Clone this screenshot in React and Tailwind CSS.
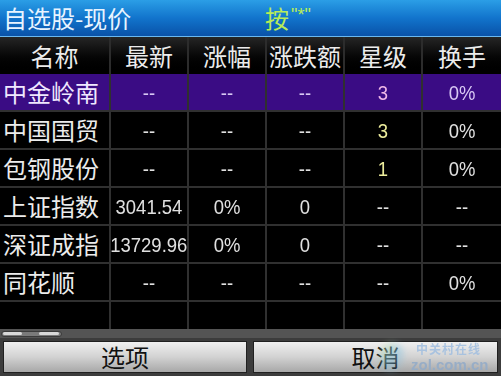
import React from "react";

const cjk = { fontFamily: '"Noto Sans CJK SC", "Noto Sans", sans-serif' };
const num = { fontFamily: '"Liberation Sans", "Noto Sans CJK SC", sans-serif' };

const headers = ["名称", "最新", "涨幅", "涨跌额", "星级", "换手"];
const rows = [
  ["中金岭南", "--", "--", "--", "3", "0%"],
  ["中国国贸", "--", "--", "--", "3", "0%"],
  ["包钢股份", "--", "--", "--", "1", "0%"],
  ["上证指数", "3041.54", "0%", "0", "--", "--"],
  ["深证成指", "13729.96", "0%", "0", "--", "--"],
  ["同花顺", "--", "--", "--", "--", "0%"],
];

const widths = ["w-[111px]", "w-[78px]", "w-[78px]", "w-[78px]", "w-[78px]", "w-[78px]"];

function Num({ children, className = "" }) {
  return (
    <span className={"inline-block text-[21px] leading-none scale-x-[0.88] " + className} style={num}>
      {children}
    </span>
  );
}

export default function App() {
  return (
    <div className="w-[501px] h-[376px] bg-black overflow-hidden flex flex-col relative select-none">
      {/* Title bar */}
      <div className="h-[37px] flex items-center bg-gradient-to-b from-[#2b9ee6] via-[#1274cc] to-[#0a52a8] border-b border-[#6ab8f0]">
        <span className="w-[265px] pl-[3px] text-[24px] leading-none text-[#e8f4ff]" style={cjk}>
          自选股-现价
        </span>
        <span className="text-[24px] leading-none text-[#b8ec58]" style={cjk}>
          按<span className="text-[18px] align-top ml-[2px]" style={num}>"*"</span>
        </span>
      </div>

      {/* Header */}
      <div className="h-[37px] flex bg-gradient-to-b from-[#262626] to-black">
        {headers.map((h, i) => (
          <div
            key={i}
            className={
              widths[i] +
              " flex items-center justify-center text-[24px] leading-none text-[#ececec] " +
              (i < 5 ? "border-r-2 border-[#2c2c2c]" : "")
            }
            style={cjk}
          >
            {h}
          </div>
        ))}
      </div>

      {/* Rows */}
      {rows.map((r, ri) => {
        const hl = ri === 0;
        return (
          <div
            key={ri}
            className={"h-[38px] flex border-b-2 border-[#303030] " + (hl ? "bg-[#3a0c84]" : "bg-black")}
          >
            {r.map((c, ci) => {
              const base =
                widths[ci] + " flex items-center " + (ci < 5 ? "border-r-2 border-[#303030] " : "");
              if (ci === 0) {
                return (
                  <div
                    key={ci}
                    className={base + "pl-[3px] text-[24px] leading-none " + (hl ? "text-[#f0e8ff]" : "text-[#ececec]")}
                    style={cjk}
                  >
                    {c}
                  </div>
                );
              }
              let color = hl ? "text-[#d8c8f4]" : "text-[#e0e0e0]";
              if (ci === 4 && c !== "--") color = hl ? "text-[#f0b8e8]" : "text-[#ecec9c]";
              return (
                <div key={ci} className={base + "justify-center"}>
                  <Num className={color}>{c}</Num>
                </div>
              );
            })}
          </div>
        );
      })}

      {/* Empty row */}
      <div className="h-[27px] flex bg-black">
        {widths.map((w, i) => (
          <div key={i} className={w + (i < 5 ? " border-r-2 border-[#303030]" : "")} />
        ))}
      </div>

      {/* Scroll track */}
      <div className="h-[9px] bg-[#545454] flex items-center pl-[1px]">
        <div className="w-[61px] h-[6px] rounded-full border border-[#3a3a3a] bg-[#7a7a7a] flex items-center px-[1px] gap-[17px]">
          <div className="w-[19px] h-[3px] rounded-full bg-[#d8d8d8]" />
          <div className="w-[20px] h-[3px] rounded-full bg-[#d8d8d8]" />
        </div>
      </div>

      {/* Bottom buttons */}
      <div className="flex-1 bg-[#3c3c3c] flex items-start pt-[3px] px-[3px] gap-[6px]">
        <div
          className="w-[244px] h-[32px] border border-[#202020] bg-gradient-to-b from-[#f0f0f0] via-[#d2d2d2] to-[#a8a8a8] flex items-center justify-center text-[24px] leading-none text-[#111]"
          style={cjk}
        >
          选项
        </div>
        <div
          className="w-[245px] h-[32px] border border-[#202020] bg-gradient-to-b from-[#f0f0f0] via-[#d2d2d2] to-[#a8a8a8] flex items-center justify-center text-[24px] leading-none text-[#111]"
          style={cjk}
        >
          取消
        </div>
      </div>

      {/* Watermark */}
      <div className="absolute left-[380px] top-[341px] w-[118px] h-[33px] pointer-events-none">
        <div className="absolute left-0 top-[2px] w-[24px] h-[28px] rounded-full bg-gradient-to-br from-[#e0f080] via-[#80c0e0] to-transparent opacity-50 blur-[3px]" />
        <div className="absolute left-[36px] top-[1px] text-[12px] leading-[13px] font-bold text-[#a4c0e0] opacity-90 tracking-[1px]" style={cjk}>
          中关村在线
        </div>
        <div className="absolute left-[31px] top-[16px] text-[15px] leading-[15px] font-bold text-[#94acc8] opacity-90" style={num}>
          zol.com.cn
        </div>
      </div>
    </div>
  );
}
